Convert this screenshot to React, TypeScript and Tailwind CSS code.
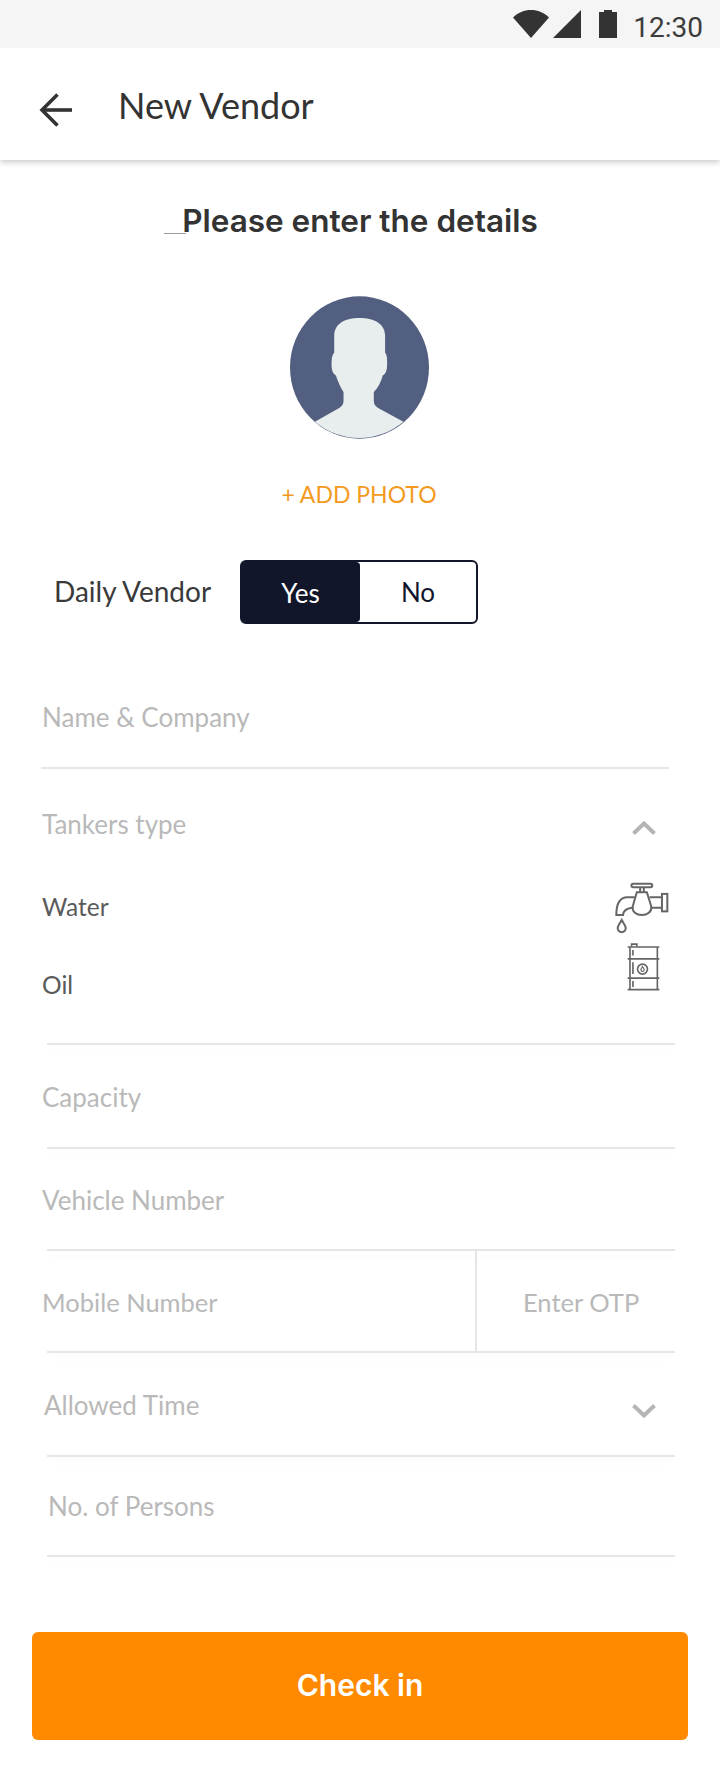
import React from "react";

const Arrow = () => (
  <svg width="36" height="36" viewBox="38 92 36 36" fill="none" stroke="#333" strokeWidth="3.6" className="shrink-0">
    <path d="M72 110H43" />
    <path d="M57.5 94.5 42 110l15.5 15.5" />
  </svg>
);

const Avatar = () => (
  <svg width="139" height="143" viewBox="150 48 418 428" className="block">
    <ellipse cx="359" cy="262" rx="209" ry="214" fill="#535f80" />
    <path
      d="M225 425 L298 384 Q311 376 311 362 L311 336 Q298 316 288 286 Q274 278 275 250 Q275 225 283 217 L283 165 C284 128 318 113 359 113 C400 113 435 128 436 165 L436 217 Q443 225 442 250 Q443 278 429 286 Q421 316 402 336 L402 362 Q402 376 415 384 L491 425 A209 214 0 0 1 225 425 Z"
      fill="#e8eded"
    />
  </svg>
);

const Faucet = () => (
  <svg width="54" height="52" viewBox="106 244 161 154" fill="none" stroke="#666" strokeWidth="6" className="block">
    <rect x="155" y="249" width="62" height="10" rx="5" />
    <path d="M181 260v13M192 260v13" />
    <path d="M171 274h30l13 42c3 16-12 26-28 26s-30-10-27-26Z" />
    <path d="M209 289h36M214 320h31" />
    <rect x="246" y="279" width="16" height="52" />
    <path d="M165 289h-22c-22 0-33 18-33 53h20c0-14 12-20 27-22" />
    <path d="M126 357c-5 10-12 16-12 24a12 12 0 0 0 24 0c0-8-7-14-12-24Z" />
  </svg>
);

const Barrel = () => (
  <svg width="33" height="48" viewBox="138 426 100 145" fill="none" stroke="#666" strokeWidth="5" className="block">
    <path d="M140 438h96M140 474h96M140 532h96M140 567h96" />
    <path d="M147 438v129M230 438v129" />
    <path d="M152 437v-8h16v8" />
    <path d="M156 447v17M156 484v36M156 541v18" />
    <circle cx="185" cy="505" r="15" />
    <path d="M185 497c-2 4-5 7-5 10a5 5 0 0 0 10 0c0-3-3-6-5-10Z" strokeWidth="3.5" />
  </svg>
);

const Chevron = ({ up }: { up?: boolean }) => (
  <svg width="24" height="14" viewBox="0 0 24 14" fill="none" stroke="#b5b5b5" strokeWidth="4" className="block">
    <path d={up ? "M1.5 12.5 12 2.5l10.5 10" : "M1.5 1.5 12 11.5l10.5-10"} />
  </svg>
);

const Line = () => (
  <div className="ml-[5px] h-[2px] bg-[#e6e6e6] shadow-[0_5px_8px_rgba(0,0,0,0.035)]" />
);

export default function App() {
  return (
    <div className="w-[720px] h-[1790px] bg-white overflow-hidden font-['Lato','Liberation_Sans',sans-serif] text-[#b9b9b9]">
      {/* status bar */}
      <div className="relative z-10 h-12 bg-[#f5f5f5] flex justify-end items-start pt-[10px] pr-[17px]">
        <svg width="36" height="28" viewBox="0 0 36 28" className="block">
          <path d="M0 7.5C5 2.5 11 0 18 0s13 2.5 18 7.5L18 28Z" fill="#333" />
        </svg>
        <svg width="28" height="28" viewBox="0 0 28 28" className="block ml-[4px]">
          <path d="M28 0v28H0Z" fill="#333" />
        </svg>
        <svg width="18" height="28" viewBox="0 0 18 28" className="block ml-[18px]">
          <path d="M5 2V0h8v2h5v26H0V2Z" fill="#333" />
        </svg>
        <span className="ml-[16px] mt-[4px] font-['Roboto',sans-serif] text-[28px] leading-[28px] text-[#3c3c3c]">12:30</span>
      </div>

      {/* app bar */}
      <div className="relative h-[112px] bg-white shadow-[0_2px_6px_rgba(0,0,0,0.22)] flex items-center pl-[38px]">
        <div className="mt-[12px]"><Arrow /></div>
        <span className="ml-[44px] mt-[1px] text-[36px] leading-[40px] text-[#333]">New Vendor</span>
      </div>

      {/* heading */}
      <div className="mt-[41px] flex justify-center">
        <h1 className="relative font-['Inter',sans-serif] text-[31.5px] leading-[40px] font-semibold text-[#333]">
          <span className="absolute -left-[18px] top-[32px] w-[22px] h-px bg-[#9a9a9a]" />
          Please enter the details
        </h1>
      </div>

      <div className="mt-[55px] flex justify-center pr-[2px]"><Avatar /></div>
      <div className="mt-[41px] text-center text-[23px] leading-[28px] text-[#f39a1e] pr-[2px]">+ ADD PHOTO</div>

      {/* daily vendor */}
      <div className="mt-[52px] h-[64px] flex items-center pl-[54px]">
        <span className="w-[186px] -mt-[2px] text-[28px] leading-[32px] text-[#3a3a3a]">Daily Vendor</span>
        <div className="w-[238px] h-[64px] flex border-2 border-[#12162b] rounded-[6px] bg-white text-[26px]">
          <div className="w-[119px] -ml-px bg-[#12162b] rounded-[4px] text-white flex items-center justify-center pt-[2px]">Yes</div>
          <div className="flex-1 text-[#12162b] flex items-center justify-center">No</div>
        </div>
      </div>

      {/* name */}
      <div className="mt-[59px] ml-[41px] mr-[51px] h-[86px] pt-[18px] pl-[1px] border-b-2 border-[#e6e6e6] text-[26px] leading-[32px]">
        Name &amp; Company
      </div>

      {/* tankers */}
      <div className="pl-[42px] pr-[45px]">
        <div className="pt-[39px] pr-[19px] flex justify-between items-center text-[26px] leading-[32px]">
          <span>Tankers type</span>
          <div className="mt-[7px]"><Chevron up /></div>
        </div>
        <div className="mt-[44px] flex justify-between items-start">
          <div className="pt-[1px] text-[24.5px] leading-[32px] text-[#5a5a5a]">
            <div className="h-[84px] flex items-start pt-[6px]">Water</div>
            <div className="flex items-start">Oil</div>
          </div>
          <div className="flex flex-col items-end -mt-[2px] pr-[6px]">
            <Faucet />
            <div className="mt-[9px] mr-[9px]"><Barrel /></div>
          </div>
        </div>
        <div className="mt-[42px]"><Line /></div>

        <div className="pt-[36px] h-[102px] text-[26px] leading-[32px]">Capacity</div>
        <Line />
        <div className="pt-[35px] h-[100px] text-[26px] leading-[32px]">Vehicle Number</div>
        <Line />
        <div className="h-[100px] flex text-[25.5px] leading-[32px]">
          <div className="w-[435px] pt-[35px] border-r-2 border-[#e6e6e6]">Mobile Number</div>
          <div className="pt-[35px] pl-[46px]">Enter OTP</div>
        </div>
        <Line />
        <div className="h-[102px] pt-[36px] pl-[2px] pr-[19px] flex justify-between items-start text-[26px] leading-[32px]">
          <span>Allowed Time</span>
          <div className="mt-[15px]"><Chevron /></div>
        </div>
        <Line />
        <div className="h-[98px] pt-[33px] pl-[6px] text-[26px] leading-[32px]">No. of Persons</div>
        <Line />
      </div>

      <button className="block mt-[75px] ml-[32px] w-[656px] h-[108px] pb-[2px] rounded-[6px] bg-[#ff8a00] text-white font-['Inter',sans-serif] text-[30px] font-semibold">
        Check in
      </button>
    </div>
  );
}
